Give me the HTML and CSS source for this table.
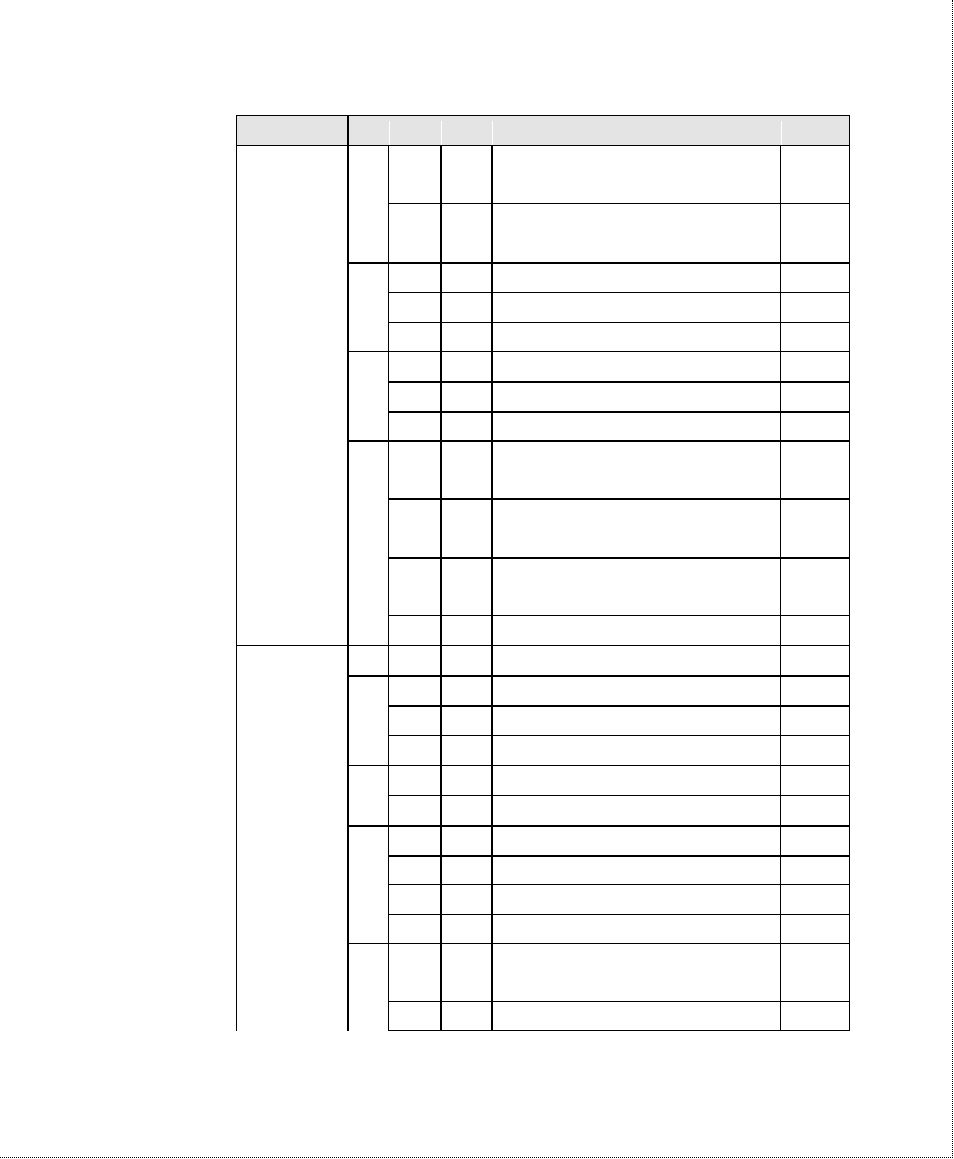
FILE: index.html
```html
<!DOCTYPE html>
<html lang="en">
<head>
<meta charset="utf-8">
<title>Table page</title>
<link rel="stylesheet" href="styles.css">
</head>
<body>
<div class="page">
  <table class="grid">
    <colgroup>
      <col class="c-a"><col class="c-b"><col class="c-c"><col class="c-d"><col class="c-e"><col class="c-f">
    </colgroup>
    <thead>
      <tr class="head">
        <th class="a"></th><th class="b"></th><th class="c"></th><th class="d"></th><th class="e"></th><th class="f"></th>
      </tr>
    </thead>
    <tbody>
      <tr class="h58 t1"><td class="a" rowspan="12"></td><td class="b" rowspan="2"></td><td class="c"></td><td class="d"></td><td class="e"></td><td class="f"></td></tr>
      <tr class="h59 t1"><td class="c"></td><td class="d"></td><td class="e"></td><td class="f"></td></tr>
      <tr class="h30 t2"><td class="b" rowspan="3"></td><td class="c"></td><td class="d"></td><td class="e"></td><td class="f"></td></tr>
      <tr class="h30 t1"><td class="c"></td><td class="d"></td><td class="e"></td><td class="f"></td></tr>
      <tr class="h29 t1"><td class="c"></td><td class="d"></td><td class="e"></td><td class="f"></td></tr>
      <tr class="h30 t1"><td class="b" rowspan="3"></td><td class="c"></td><td class="d"></td><td class="e"></td><td class="f"></td></tr>
      <tr class="h30 t2"><td class="c"></td><td class="d"></td><td class="e"></td><td class="f"></td></tr>
      <tr class="h29 t2"><td class="c"></td><td class="d"></td><td class="e"></td><td class="f"></td></tr>
      <tr class="h58 t2"><td class="b" rowspan="4"></td><td class="c"></td><td class="d"></td><td class="e"></td><td class="f"></td></tr>
      <tr class="h59 t2"><td class="c"></td><td class="d"></td><td class="e"></td><td class="f"></td></tr>
      <tr class="h58 t2"><td class="c"></td><td class="d"></td><td class="e"></td><td class="f"></td></tr>
      <tr class="h30 t1"><td class="c"></td><td class="d"></td><td class="e"></td><td class="f"></td></tr>

      <tr class="h30 t1"><td class="a open" rowspan="12"></td><td class="b"></td><td class="c"></td><td class="d"></td><td class="e"></td><td class="f"></td></tr>
      <tr class="h30 t2"><td class="b" rowspan="3"></td><td class="c"></td><td class="d"></td><td class="e"></td><td class="f"></td></tr>
      <tr class="h30 t2"><td class="c"></td><td class="d"></td><td class="e"></td><td class="f"></td></tr>
      <tr class="h30 t1"><td class="c"></td><td class="d"></td><td class="e"></td><td class="f"></td></tr>
      <tr class="h30 t1"><td class="b" rowspan="2"></td><td class="c"></td><td class="d"></td><td class="e"></td><td class="f"></td></tr>
      <tr class="h30 t1"><td class="c"></td><td class="d"></td><td class="e"></td><td class="f"></td></tr>
      <tr class="h30 t2"><td class="b" rowspan="4"></td><td class="c"></td><td class="d"></td><td class="e"></td><td class="f"></td></tr>
      <tr class="h29 t2"><td class="c"></td><td class="d"></td><td class="e"></td><td class="f"></td></tr>
      <tr class="h30 t1"><td class="c"></td><td class="d"></td><td class="e"></td><td class="f"></td></tr>
      <tr class="h29 t1"><td class="c"></td><td class="d"></td><td class="e"></td><td class="f"></td></tr>
      <tr class="h58 t1"><td class="b open" rowspan="2"></td><td class="c"></td><td class="d"></td><td class="e"></td><td class="f"></td></tr>
      <tr class="h29 t1"><td class="c"></td><td class="d"></td><td class="e"></td><td class="f"></td></tr>
    </tbody>
  </table>
</div>
</body>
</html>
```

FILE: styles.css
```css
html, body {
  margin: 0;
  padding: 0;
  background: #ffffff;
}

body {
  font-family: "Liberation Sans", Arial, sans-serif;
  font-size: 12px;
}

.page {
  width: 716px;
  height: 1042px;
  padding: 115px 0 0 236px;
  border-right: 1px dotted #000;
  border-bottom: 1px dotted #000;
}

.grid {
  border-collapse: collapse;
  table-layout: fixed;
  width: 613px;
}

.c-a { width: 111px; }
.c-b { width: 41px; }
.c-c { width: 52px; }
.c-d { width: 51px; }
.c-e { width: 289px; }
.c-f { width: 69px; }

.grid th,
.grid td {
  padding: 0;
  border: 1px solid #000;
}

/* vertical line weights */
.grid td.a { border-left: 1px solid #000; border-right: 2px solid #000; }
.grid td.b { border-left: 2px solid #000; border-right: 1px solid #000; }
.grid td.c { border-right: 2px solid #000; }
.grid td.d { border-left: 2px solid #000; border-right: 2px solid #000; }
.grid td.e { border-left: 2px solid #000; border-right: 1px solid #000; }
.grid td.f { border-right: 1px solid #000; }

/* horizontal line weights */
.grid tr.t1 td { border-top-width: 1px; }
.grid tr.t2 td { border-top-width: 2px; }
.grid tbody td { border-bottom-width: 1px; }

.grid td.open { border-bottom: none; }

.h29 { height: 29px; }
.h30 { height: 30px; }
.h58 { height: 58px; }
.h59 { height: 59px; }

/* header band */
.head { height: 30px; }
.grid th {
  background: linear-gradient(#ffffff, #ffffff) left 5px / 1px 100% no-repeat, #e4e4e4;
  border-top: 1px solid #000;
  border-bottom: 1px solid #000;
  border-left: none;
  border-right: none;
}
.grid th.a {
  background: #e4e4e4;
  border-left: 1px solid #000;
}
.grid th.b {
  background: #e4e4e4;
  border-left: 2px solid #000;
}
.grid th.f {
  border-right: 1px solid #000;
}
```
